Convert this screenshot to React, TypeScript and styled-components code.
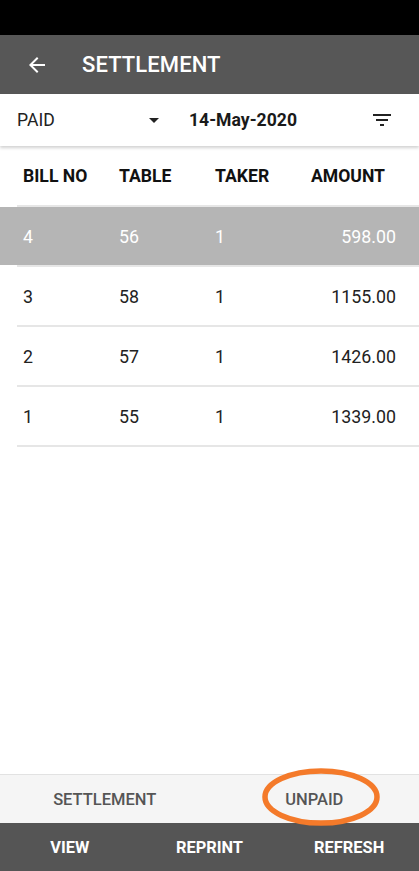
import React from "react";
import styled, { createGlobalStyle } from "styled-components";

const Global = createGlobalStyle`
  html, body { margin: 0; padding: 0; background: #fff; }
  body { font-family: Roboto, "Noto Sans", Arial, sans-serif; -webkit-font-smoothing: antialiased; }
  * { box-sizing: border-box; }
`;

const Screen = styled.div`
  width: 419px;
  height: 871px;
  display: flex;
  flex-direction: column;
  overflow: hidden;
  background: #fff;
`;

const StatusBar = styled.div`
  height: 35px;
  background: #000;
  flex-shrink: 0;
`;

const Toolbar = styled.header`
  height: 59px;
  background: #575757;
  display: flex;
  align-items: center;
  padding-left: 25px;
  gap: 33px;
  flex-shrink: 0;
`;

const Title = styled.h1`
  margin: 0;
  color: #fff;
  font-size: 22px;
  font-weight: 500;
  letter-spacing: 0.1px;
`;

const FilterRow = styled.div`
  height: 52px;
  display: flex;
  align-items: center;
  padding: 0 25px 0 17px;
  background: #fff;
  box-shadow: 0 2px 3px rgba(0, 0, 0, 0.18);
  position: relative;
  z-index: 1;
  flex-shrink: 0;
`;

const Select = styled.div`
  width: 149px;
  display: flex;
  align-items: center;
  justify-content: space-between;
  font-size: 17.6px;
  color: #222;
`;

const DateText = styled.div`
  margin-left: 23px;
  font-size: 17.6px;
  font-weight: 700;
  color: #1a1a1a;
  flex: 1;
`;

const Grid = styled.div`
  display: grid;
  grid-template-columns: 96px 96px 96px 1fr;
  align-items: center;
  padding: 0 23px;
  height: 58px;
`;

const HeadCell = styled.div`
  font-size: 17.6px;
  font-weight: 700;
  color: #111;
`;

const HeadWrap = styled.div`
  padding-top: 1px;
  flex-shrink: 0;
`;

const RowBox = styled(Grid)<{ $selected?: boolean }>`
  background: ${(p) => (p.$selected ? "#b5b5b5" : "#fff")};
  color: ${(p) => (p.$selected ? "#fff" : "#222")};
`;

const Cell = styled.div<{ $right?: boolean }>`
  font-size: 17.8px;
  text-align: ${(p) => (p.$right ? "right" : "left")};
`;

const Divider = styled.div`
  height: 2px;
  margin-left: 17px;
  background: #e6e6e6;
`;

const Body = styled.div`
  flex: 1;
`;

const TabBar = styled.nav`
  height: 49px;
  border-top: 1px solid #e2e2e2;
  background: #f5f5f5;
  display: grid;
  grid-template-columns: 1fr 1fr;
  align-items: center;
  position: relative;
  flex-shrink: 0;
`;

const Tab = styled.div`
  text-align: center;
  font-size: 16.5px;
  font-weight: 500;
  color: #555;
`;

const Highlight = styled.svg`
  position: absolute;
  left: 262px;
  top: -7px;
  width: 118px;
  height: 58px;
  pointer-events: none;
`;

const ActionBar = styled.div`
  height: 48px;
  background: #555;
  display: grid;
  grid-template-columns: repeat(3, 1fr);
  align-items: center;
  flex-shrink: 0;
`;

const Action = styled.div`
  text-align: center;
  color: #fff;
  font-size: 16.4px;
  font-weight: 700;
`;

const rows = [
  { bill: "4", table: "56", taker: "1", amount: "598.00", selected: true },
  { bill: "3", table: "58", taker: "1", amount: "1155.00" },
  { bill: "2", table: "57", taker: "1", amount: "1426.00" },
  { bill: "1", table: "55", taker: "1", amount: "1339.00" },
];

export default function App() {
  return (
    <Screen>
      <Global />
      <StatusBar />
      <Toolbar>
        <svg width="24" height="24" viewBox="0 0 24 24">
          <path d="M20 11H7.83l5.59-5.59L12 4l-8 8 8 8 1.41-1.41L7.83 13H20v-2z" fill="#fff" />
        </svg>
        <Title>SETTLEMENT</Title>
      </Toolbar>
      <FilterRow>
        <Select>
          <span>PAID</span>
          <svg width="24" height="24" viewBox="0 0 24 24">
            <path d="M7 10l5 5 5-5z" fill="#222" />
          </svg>
        </Select>
        <DateText>14-May-2020</DateText>
        <svg width="24" height="24" viewBox="0 0 24 24">
          <path d="M10 18h4v-2h-4v2zM3 6v2h18V6H3zm3 7h12v-2H6v2z" fill="#222" />
        </svg>
      </FilterRow>
      <HeadWrap>
        <Grid>
          <HeadCell>BILL NO</HeadCell>
          <HeadCell>TABLE</HeadCell>
          <HeadCell>TAKER</HeadCell>
          <HeadCell>AMOUNT</HeadCell>
        </Grid>
        <Divider />
      </HeadWrap>
      <Body>
        {rows.map((r) => (
          <div key={r.bill}>
            <RowBox $selected={r.selected}>
              <Cell>{r.bill}</Cell>
              <Cell>{r.table}</Cell>
              <Cell>{r.taker}</Cell>
              <Cell $right>{r.amount}</Cell>
            </RowBox>
            <Divider />
          </div>
        ))}
      </Body>
      <TabBar>
        <Tab>SETTLEMENT</Tab>
        <Tab>UNPAID</Tab>
        <Highlight viewBox="0 0 118 58">
          <ellipse cx="59" cy="29" rx="56" ry="26" fill="none" stroke="#f47a2a" strokeWidth="5.5" />
        </Highlight>
      </TabBar>
      <ActionBar>
        <Action>VIEW</Action>
        <Action>REPRINT</Action>
        <Action>REFRESH</Action>
      </ActionBar>
    </Screen>
  );
}
